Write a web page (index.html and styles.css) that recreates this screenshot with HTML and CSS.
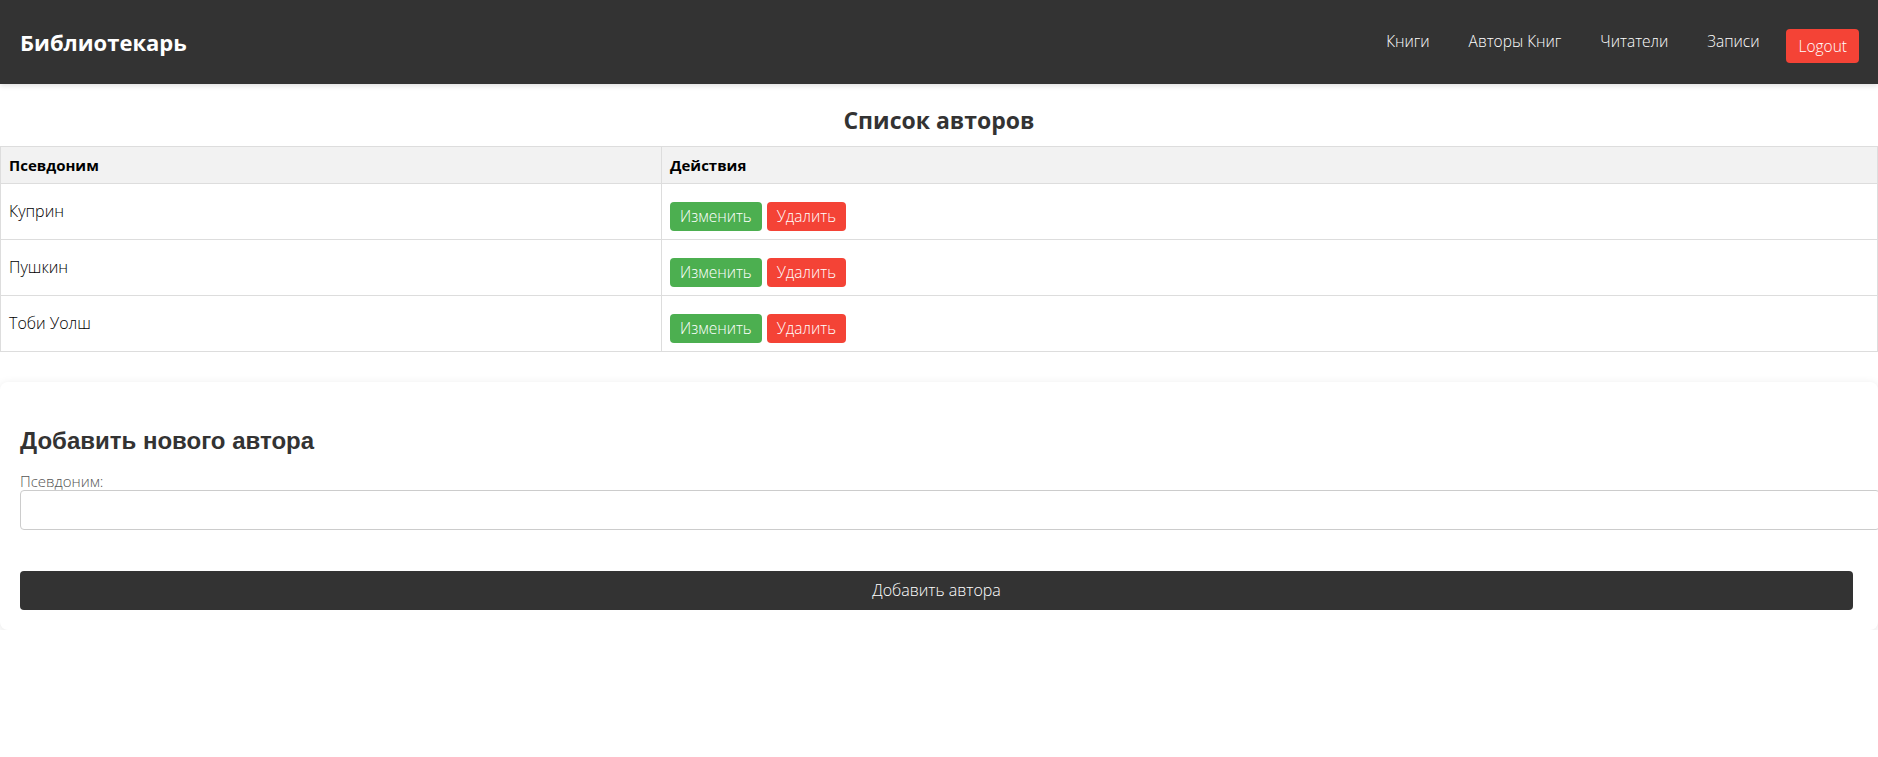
FILE: index.html
```html
<!DOCTYPE html>
<html lang="ru">
<head>
<meta charset="utf-8">
<title>Библиотекарь</title>
<link rel="stylesheet" href="styles.css">
</head>
<body>
<header class="topbar">
  <div class="brand">Библиотекарь</div>
  <nav class="nav">
    <a class="nav-link" href="#">Книги</a>
    <a class="nav-link" href="#">Авторы Книг</a>
    <a class="nav-link" href="#">Читатели</a>
    <a class="nav-link" href="#">Записи</a>
    <a class="logout" href="#">Logout</a>
  </nav>
</header>
<main>
  <h2 class="page-title">Список авторов</h2>
  <table class="authors">
    <colgroup>
      <col class="col-name">
      <col class="col-actions">
    </colgroup>
    <thead>
      <tr><th>Псевдоним</th><th>Действия</th></tr>
    </thead>
    <tbody>
      <tr>
        <td class="name">Куприн</td>
        <td><div class="actions"><button class="btn btn-edit">Изменить</button><button class="btn btn-delete">Удалить</button></div></td>
      </tr>
      <tr>
        <td class="name">Пушкин</td>
        <td><div class="actions"><button class="btn btn-edit">Изменить</button><button class="btn btn-delete">Удалить</button></div></td>
      </tr>
      <tr>
        <td class="name">Тоби Уолш</td>
        <td><div class="actions"><button class="btn btn-edit">Изменить</button><button class="btn btn-delete">Удалить</button></div></td>
      </tr>
    </tbody>
  </table>
  <section class="card">
    <h2 class="card-title">Добавить нового автора</h2>
    <form class="add-form">
      <label class="field-label" for="pseudonym">Псевдоним:</label>
      <input class="field-input" id="pseudonym" type="text">
      <button class="submit" type="button">Добавить автора</button>
    </form>
  </section>
</main>
</body>
</html>
```
FILE: styles.css
```css
html, body {
  overflow-x: hidden;
}
body {
  margin: 0;
  background: #fff;
  font-family: "Open Sans", "Noto Sans", sans-serif;
  font-weight: 300;
  color: #000;
}
.topbar {
  height: 84px;
  background: #333;
  display: flex;
  align-items: center;
  justify-content: space-between;
  padding: 0 19px 0 20px;
  box-shadow: 0 2px 5px rgba(0, 0, 0, 0.12);
  position: relative;
}
.brand {
  font-family: "Open Sans", sans-serif;
  font-weight: 700;
  font-size: 22px;
  color: #fff;
}
.nav {
  display: flex;
  align-items: center;
}
.nav-link {
  color: #fff;
  text-decoration: none;
  font-size: 15.5px;
  font-weight: 300;
  margin-left: 39px;
  margin-bottom: 2px;
}
.logout {
  margin-left: 27px;
  margin-top: 8px;
  background: #f44336;
  color: #fff;
  text-decoration: none;
  font-size: 15.5px;
  font-weight: 300;
  line-height: 18px;
  padding: 8px 12px;
  border-radius: 4px;
}
.page-title {
  font-family: "Open Sans", sans-serif;
  font-weight: 700;
  font-size: 23px;
  line-height: 32px;
  color: #333;
  text-align: center;
  margin: 20px 0 10px;
}
.authors {
  width: 100%;
  border-collapse: collapse;
  table-layout: fixed;
}
.col-name {
  width: 661px;
}
.authors th,
.authors td {
  border: 1px solid #ddd;
  padding: 8px;
  text-align: left;
}
.authors th {
  background: #f2f2f2;
  font-family: "Open Sans", sans-serif;
  font-weight: 700;
  font-size: 15px;
  line-height: 20px;
  color: #000;
}
.authors td {
  font-size: 16px;
  line-height: 19px;
}
.actions {
  display: flex;
  gap: 5px;
  padding-top: 10px;
}
.btn {
  border: none;
  color: #fff;
  font-family: "Open Sans", sans-serif;
  font-weight: 300;
  font-size: 15.5px;
  line-height: 19px;
  padding: 5px 10px;
  border-radius: 4px;
}
.btn-edit {
  background: #4caf50;
}
.btn-delete {
  background: #f44336;
}
.card {
  margin: 30px 0 0;
  padding: 20px;
  background: #fff;
  border-radius: 8px;
  box-shadow: 0 2px 10px rgba(0, 0, 0, 0.1);
}
.card-title {
  font-family: "Liberation Sans", Arial, sans-serif;
  font-weight: 700;
  font-size: 24px;
  color: #333;
  margin: 25px 0 17px;
}
.add-form {
  display: flex;
  flex-direction: column;
  align-items: flex-start;
}
.field-label {
  display: block;
  font-size: 15px;
  line-height: 18px;
  color: #555;
}
.field-input {
  display: block;
  width: 100%;
  height: 18px;
  line-height: 18px;
  padding: 10px;
  border: 1px solid #ccc;
  border-radius: 4px;
  font-size: 16px;
  margin: 0;
  flex-shrink: 0;
}
.submit {
  margin-top: 41px;
  width: calc(100% - 5px);
  border: none;
  background: #333;
  color: #fff;
  font-family: "Open Sans", sans-serif;
  font-weight: 300;
  font-size: 16px;
  line-height: 19px;
  padding: 10px;
  border-radius: 4px;
}
```
